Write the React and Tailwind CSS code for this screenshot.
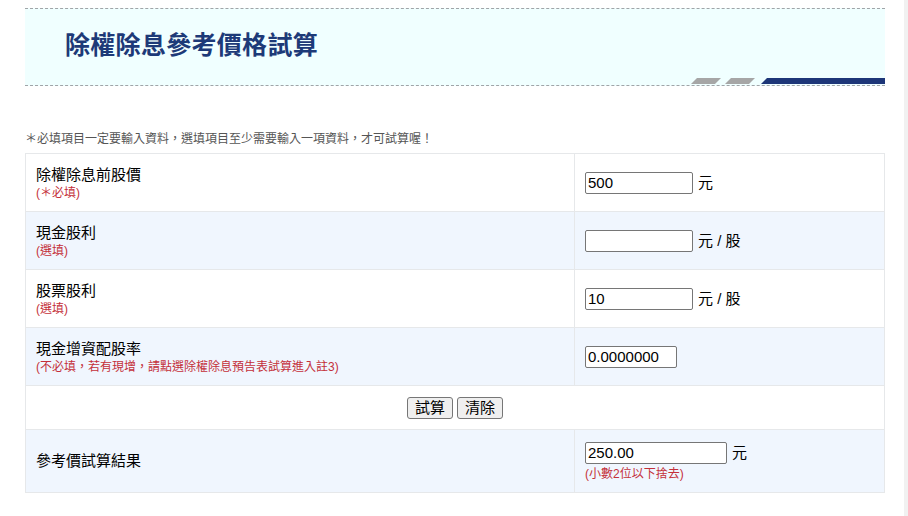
import React, { useState } from "react";

const font = { fontFamily: '"Liberation Sans", "Noto Sans CJK TC", sans-serif' };

const Row = ({ label, note, alt, children }) => (
  <tr className={alt ? "bg-[#f0f6fe]" : "bg-white"}>
    <td className="border border-[#e6e8ea] pl-[10px] h-[58px] w-[549px] align-middle">
      <div className="text-[15px] leading-[20px] text-black">{label}</div>
      {note && (
        <div className="text-[12px] leading-[16px] text-[#c4303a]">{note}</div>
      )}
    </td>
    <td className="border border-[#e6e8ea] pl-[10px] align-middle">{children}</td>
  </tr>
);

const Field = ({ value, onChange, w }) => (
  <input
    value={value}
    onChange={(e) => onChange(e.target.value)}
    className={`${w} h-[22px] border border-[#767676] rounded-[2px] bg-white px-[2px] text-[15px] text-black outline-none align-middle`}
    style={font}
  />
);

export default function App() {
  const [price, setPrice] = useState("500");
  const [cash, setCash] = useState("");
  const [stock, setStock] = useState("10");
  const [rate, setRate] = useState("0.0000000");
  const [result, setResult] = useState("250.00");

  const calc = () => {
    const p = Number(price) || 0;
    const c = Number(cash) || 0;
    const s = Number(stock) || 0;
    const r = (p - c) / (1 + s / 10);
    setResult((Math.floor(r * 100) / 100).toFixed(2));
  };

  const clear = () => {
    setPrice("");
    setCash("");
    setStock("");
    setRate("0.0000000");
    setResult("");
  };

  return (
    <div className="flex justify-between w-[908px] h-[516px] bg-white" style={font}>
      <div className="pl-[25px] pt-[8px]">
        {/* header */}
        <div className="relative w-[860px] h-[78px] bg-[#f0ffff] border-y border-dashed border-[#a0a4a8] flex items-center pl-[40px]">
          <h1 className="text-[25px] font-bold text-[#1d3a78] tracking-[0.3px] -mt-[2px]">除權除息參考價格試算</h1>
          <svg className="absolute right-0 bottom-0" width="194" height="7" viewBox="0 0 194 7">
            <polygon points="6,0 30,0 24,6 0,6" fill="#a6a6a6" />
            <polygon points="40,0 64,0 58,6 34,6" fill="#a6a6a6" />
            <polygon points="76,0 194,0 194,6 70,6" fill="#1d3678" />
          </svg>
        </div>

        <p className="mt-[45px] text-[12px] leading-[16px] text-[#555]">＊必填項目一定要輸入資料，選填項目至少需要輸入一項資料，才可試算喔！</p>

        {/* form */}
        <table className="mt-[6px] w-[860px] border-collapse">
          <tbody>
            <Row label="除權除息前股價" note="(＊必填)">
              <Field value={price} onChange={setPrice} w="w-[108px]" />
              <span className="ml-[5px] text-[15px] align-middle">元</span>
            </Row>
            <Row label="現金股利" note="(選填)" alt>
              <Field value={cash} onChange={setCash} w="w-[108px]" />
              <span className="ml-[5px] text-[15px] align-middle">元 / 股</span>
            </Row>
            <Row label="股票股利" note="(選填)">
              <Field value={stock} onChange={setStock} w="w-[108px]" />
              <span className="ml-[5px] text-[15px] align-middle">元 / 股</span>
            </Row>
            <Row label="現金增資配股率" note="(不必填，若有現增，請點選除權除息預告表試算進入註3)" alt>
              <Field value={rate} onChange={setRate} w="w-[92px]" />
            </Row>
            <tr className="bg-white">
              <td colSpan={2} className="border border-[#e6e8ea] h-[44px] text-center align-middle">
                <div className="flex justify-center gap-[4px]">
                  <button onClick={calc} className="h-[22px] px-[7px] border border-[#767676] rounded-[3px] bg-[#efefef] text-[15px] leading-none text-black">試算</button>
                  <button onClick={clear} className="h-[22px] px-[7px] border border-[#767676] rounded-[3px] bg-[#efefef] text-[15px] leading-none text-black">清除</button>
                </div>
              </td>
            </tr>
            <tr className="bg-[#f0f6fe]">
              <td className="border border-[#e6e8ea] pl-[10px] h-[63px] text-[15px] align-middle">參考價試算結果</td>
              <td className="border border-[#e6e8ea] pl-[10px] align-middle">
                <div>
                  <Field value={result} onChange={setResult} w="w-[142px]" />
                  <span className="ml-[5px] text-[15px] align-middle">元</span>
                </div>
                <div className="text-[12px] leading-[16px] text-[#c4303a] mt-[1px]">(小數2位以下捨去)</div>
              </td>
            </tr>
          </tbody>
        </table>
      </div>
      <div className="w-[4px] h-full bg-[#f1f1f1]" />
    </div>
  );
}
